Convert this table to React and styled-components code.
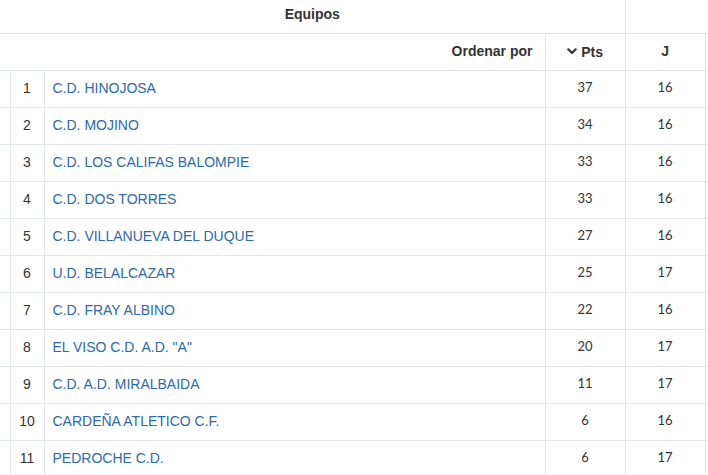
import React from "react";
import styled, { createGlobalStyle } from "styled-components";

const Global = createGlobalStyle`
  html, body { margin: 0; padding: 0; background: #fff; }
  body { overflow: hidden; font-family: "Liberation Sans", Arial, sans-serif; }
`;

const Page = styled.div`
  width: 708px;
  height: 475px;
  overflow: hidden;
`;

const Table = styled.table`
  border-collapse: collapse;
  table-layout: fixed;
  width: 806px;
  font-size: 14px;
  color: #333;
`;

const HeadCell = styled.th`
  height: ${(p) => p.$h}px;
  padding: 0 ${(p) => (p.$align === "right" ? 12 : 0)}px ${(p) => p.$pb || 1}px 0;
  font-weight: 700;
  font-size: 14px;
  color: #333;
  text-align: ${(p) => p.$align || "center"};
  border-bottom: 1px solid #e3e7eb;
  border-left: ${(p) => (p.$left ? "1px solid #e3e7eb" : "none")};
  box-sizing: border-box;
`;

const Cell = styled.td`
  height: 37px;
  padding: 0 0 ${(p) => (p.$stat ? 4 : 2)}px ${(p) => (p.$team ? 8 : 0)}px;
  border-bottom: 1px solid #e3e7eb;
  border-left: ${(p) => (p.$noLeft ? "none" : "1px solid #e3e7eb")};
  text-align: ${(p) => (p.$team ? "left" : "center")};
  font-family: ${(p) =>
    p.$stat ? 'Lato, "Noto Sans", sans-serif' : '"Liberation Sans", Arial, sans-serif'};
  font-size: ${(p) => (p.$stat ? 13 : 14)}px;
  color: #333;
  box-sizing: border-box;
  vertical-align: middle;
`;

const TeamLink = styled.a`
  color: #2b6aac;
  text-decoration: none;
`;

const SortLabel = styled.span`
  display: inline-flex;
  align-items: center;
  gap: 4px;
`;

const teams = [
  [1, "C.D. HINOJOSA", 37, 16],
  [2, "C.D. MOJINO", 34, 16],
  [3, "C.D. LOS CALIFAS BALOMPIE", 33, 16],
  [4, "C.D. DOS TORRES", 33, 16],
  [5, "C.D. VILLANUEVA DEL DUQUE", 27, 16],
  [6, "U.D. BELALCAZAR", 25, 17],
  [7, "C.D. FRAY ALBINO", 22, 16],
  [8, 'EL VISO C.D. A.D. "A"', 20, 17],
  [9, "C.D. A.D. MIRALBAIDA", 11, 17],
  [10, "CARDEÑA ATLETICO C.F.", 6, 16],
  [11, "PEDROCHE C.D.", 6, 17],
];

const Chevron = () => (
  <svg width="10" height="7" viewBox="0 0 10 7" aria-hidden="true">
    <polyline
      points="1.3,1.3 5,5 8.7,1.3"
      fill="none"
      stroke="#333"
      strokeWidth="2.2"
      strokeLinecap="round"
      strokeLinejoin="round"
    />
  </svg>
);

export default function App() {
  return (
    <Page>
      <Global />
      <Table>
        <colgroup>
          <col style={{ width: 10 }} />
          <col style={{ width: 34 }} />
          <col style={{ width: 501 }} />
          <col style={{ width: 80 }} />
          <col style={{ width: 80 }} />
          <col style={{ width: 101 }} />
        </colgroup>
        <thead>
          <tr>
            <HeadCell $h={33} $pb={4} colSpan={4}>Equipos</HeadCell>
            <HeadCell $h={33} colSpan={2} $left />
          </tr>
          <tr>
            <HeadCell $h={37} colSpan={3} $align="right">Ordenar por</HeadCell>
            <HeadCell $h={37} $left>
              <SortLabel>
                <Chevron />
                Pts
              </SortLabel>
            </HeadCell>
            <HeadCell $h={37} $left>J</HeadCell>
            <HeadCell $h={37} $left />
          </tr>
        </thead>
        <tbody>
          {teams.map(([pos, name, pts, j]) => (
            <tr key={pos}>
              <Cell $noLeft />
              <Cell>{pos}</Cell>
              <Cell $team>
                <TeamLink href="#">{name}</TeamLink>
              </Cell>
              <Cell $stat>{pts}</Cell>
              <Cell $stat>{j}</Cell>
              <Cell />
            </tr>
          ))}
        </tbody>
      </Table>
    </Page>
  );
}
